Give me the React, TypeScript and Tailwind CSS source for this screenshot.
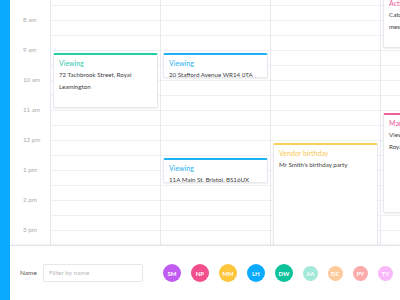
import React from "react";

type CalEvent = {
  top: number;
  height: number;
  color: string;
  titleColor: string;
  title: string;
  lines: string[];
};

const hours = ["8 am", "9 am", "10 am", "11 am", "12 pm", "1 pm", "2 pm", "3 pm"];

const days: CalEvent[][] = [
  [
    {
      top: 53,
      height: 55,
      color: "border-t-[#22cfa9]",
      titleColor: "text-[#2fc9aa]",
      title: "Viewing",
      lines: ["72 Tachbrook Street, Royal", "Leamington"],
    },
  ],
  [
    {
      top: 53,
      height: 25,
      color: "border-t-[#1eb3f4]",
      titleColor: "text-[#27b1ef]",
      title: "Viewing",
      lines: ["20 Stafford Avenue WR14 0TA"],
    },
    {
      top: 158,
      height: 25,
      color: "border-t-[#1eb3f4]",
      titleColor: "text-[#27b1ef]",
      title: "Viewing",
      lines: ["11A Main St, Bristol. BS16UX"],
    },
  ],
  [
    {
      top: 143,
      height: 130,
      color: "border-t-[#fccf56]",
      titleColor: "text-[#f9c955]",
      title: "Vendor birthday",
      lines: ["Mr Smith's birthday party"],
    },
  ],
  [
    {
      top: -7,
      height: 55,
      color: "border-t-[#f2609a]",
      titleColor: "text-[#f0609a]",
      title: "Activity",
      lines: ["Catch up with landlord", "message"],
    },
    {
      top: 113,
      height: 100,
      color: "border-t-[#f2609a]",
      titleColor: "text-[#f0609a]",
      title: "Market appraisal",
      lines: ["Viewing at 14 Clarendon Avenue", "Royal Leamington"],
    },
  ],
];

const people = [
  { initials: "SM", bg: "bg-[#c15cf2]", size: "w-[18px] h-[18px]" },
  { initials: "NP", bg: "bg-[#f24f8f]", size: "w-[18px] h-[18px]" },
  { initials: "MM", bg: "bg-[#fdc63c]", size: "w-[18px] h-[18px]" },
  { initials: "LH", bg: "bg-[#0aabff]", size: "w-[18px] h-[18px]" },
  { initials: "DW", bg: "bg-[#0cc29b]", size: "w-[18px] h-[18px]" },
  { initials: "AA", bg: "bg-[#a3e9da]", size: "w-[15px] h-[15px]" },
  { initials: "DC", bg: "bg-[#fdca9c]", size: "w-[15px] h-[15px]" },
  { initials: "PY", bg: "bg-[#fbabaa]", size: "w-[15px] h-[15px]" },
  { initials: "TY", bg: "bg-[#f9b9f8]", size: "w-[15px] h-[15px]" },
];

function EventCard({ ev }: { ev: CalEvent }) {
  return (
    <div
      className={`absolute left-[2px] right-[2px] bg-white border border-[#e7e9ee] border-t-[2px] ${ev.color} rounded-[2px] shadow-[0_1px_2px_rgba(0,0,0,0.07)] px-[5px] pt-[3px] overflow-hidden`}
      style={{ top: ev.top, height: ev.height }}
    >
      <div className={`text-[7px] leading-[11px] ${ev.titleColor}`}>{ev.title}</div>
      {ev.lines.map((l) => (
        <div key={l} className="text-[6.2px] leading-[12px] text-[#3d3d3d] whitespace-nowrap">
          {l}
        </div>
      ))}
    </div>
  );
}

export default function App() {
  return (
    <div className="w-[400px] h-[300px] flex overflow-hidden bg-white font-['Lato','Open_Sans',sans-serif]">
      <div className="w-[10px] shrink-0 bg-[#0aabff]" />
      <div className="flex-1 min-w-0 flex flex-col">
        <div className="h-[245px] flex overflow-hidden">
          <div className="w-[40px] shrink-0 pt-[5px] flex flex-col">
            {hours.map((h) => (
              <div
                key={h}
                className="h-[30px] flex items-center pl-[13px] text-[6.2px] text-[#ababab]"
              >
                {h}
              </div>
            ))}
          </div>
          {days.map((evs, i) => (
            <div
              key={i}
              className="w-[110px] shrink-0 relative border-l border-[#e6e9ee] flex flex-col"
            >
              <div className="h-[5px]" />
              {Array.from({ length: 16 }).map((_, r) => (
                <div key={r} className="h-[15px] border-t border-[#eef0f4]" />
              ))}
              {evs.map((ev, k) => (
                <EventCard key={k} ev={ev} />
              ))}
            </div>
          ))}
        </div>
        <div className="relative z-10 h-[55px] border-t border-[#e1e4ea] shadow-[0_-1px_3px_rgba(0,0,0,0.06)] bg-white flex items-center pl-[10px]">
          <span className="text-[6.5px] text-[#555]">Name</span>
          <div className="ml-[6px] w-[100px] h-[18px] border border-[#e4e7ec] rounded-[2px] flex items-center px-[5px] text-[6.5px] text-[#b8b8b8]">
            Filter by name
          </div>
          <div className="ml-[20px] flex items-center gap-[10px]">
            {people.map((p) => (
              <div
                key={p.initials}
                className={`${p.size} ${p.bg} shrink-0 rounded-full flex items-center justify-center text-white text-[6px] font-bold`}
              >
                {p.initials}
              </div>
            ))}
          </div>
        </div>
      </div>
    </div>
  );
}
